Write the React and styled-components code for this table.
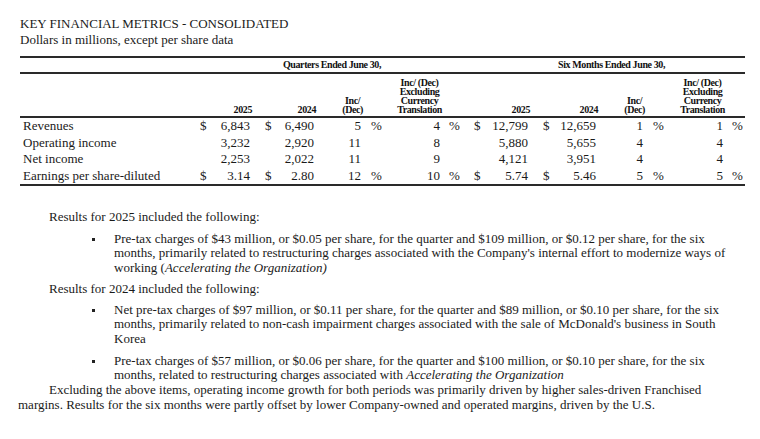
import React from "react";
import styled, { createGlobalStyle } from "styled-components";

const GlobalStyle = createGlobalStyle`
  html, body { margin: 0; padding: 0; background: #ffffff; }
  body {
    color: #1a1a1a;
    font-family: "Liberation Serif", "Times New Roman", serif;
  }
`;

const COLS =
  "178px 12px 40px 25px 39px 47px 31px 48px 26px 19px 43px 27px 41px 47px 32px 48px 22px";

const Page = styled.div`
  width: 760px;
  height: 439px;
  box-sizing: border-box;
  padding: 16px 15px 0 18px;
  overflow: hidden;
`;

const Heading = styled.header`
  padding-left: 2px;
  font-size: 13px;
  line-height: 16px;
`;

const Title = styled.div`
  text-transform: uppercase;
`;

const Table = styled.div`
  margin: 8px 0 0 2px;
  width: 725px;
`;

const GridRow = styled.div`
  display: grid;
  grid-template-columns: ${COLS};
`;

const PeriodRow = styled(GridRow)`
  height: 14px;
  align-items: center;
  border-top: 2px solid #2a2a2a;
  border-bottom: 2px solid #2a2a2a;
`;

const BoldSmall = styled.div`
  font-weight: 700;
  font-size: 10px;
  letter-spacing: -0.4px;
  color: #111111;
`;

const PeriodHead = styled(BoldSmall)`
  grid-column: ${(p) => p.$span};
  padding-left: ${(p) => p.$shift || 0}px;
  text-align: center;
  line-height: 14px;
  white-space: nowrap;
`;

const HeaderRow = styled(GridRow)`
  height: 40px;
  padding-bottom: 2px;
  align-items: end;
  border-bottom: 2px solid #2a2a2a;
`;

const ColHead = styled(BoldSmall)`
  grid-column: ${(p) => p.$span};
  text-align: right;
  margin-right: -2px;
  line-height: 9px;
  white-space: nowrap;
`;

const HeadBlock = styled.span`
  display: inline-block;
  text-align: center;
`;

const Body = styled.div`
  border-bottom: 2px solid #2a2a2a;
`;

const DataRow = styled(GridRow)`
  height: 16.5px;
  align-items: center;
  font-size: 13px;
  line-height: 16.5px;
`;

const Cell = styled.div`
  text-align: ${(p) => p.$align};
  padding-left: ${(p) => p.$pad}px;
  white-space: nowrap;
`;

const Notes = styled.section`
  margin-top: 24px;
  font-size: 13px;
  line-height: 14.7px;
  white-space: nowrap;
`;

const Lead = styled.p`
  margin: ${(p) => p.$gap}px 0 0;
  padding-left: 31px;
`;

const Bullet = styled.div`
  display: grid;
  grid-template-columns: 22px auto;
  padding-left: 74px;
  margin-top: ${(p) => p.$gap}px;
`;

const Mark = styled.span`
  width: 3px;
  height: 3px;
  margin-top: 6px;
  background: #222;
`;

const BulletText = styled.div``;

const Closing = styled.p`
  margin: ${(p) => p.$gap}px 0 0;
  text-indent: 31px;
`;

const SPEC = [
  { a: "left", p: 3 },
  { a: "left", p: 2 },
  { a: "right", p: 0 },
  { a: "left", p: 15 },
  { a: "right", p: 0 },
  { a: "right", p: 0 },
  { a: "left", p: 10 },
  { a: "right", p: 0 },
  { a: "left", p: 9 },
  { a: "left", p: 8 },
  { a: "right", p: 0 },
  { a: "left", p: 15 },
  { a: "right", p: 0 },
  { a: "right", p: 0 },
  { a: "left", p: 10 },
  { a: "right", p: 0 },
  { a: "left", p: 9 },
];

const ROWS = [
  ["Revenues", "$", "6,843", "$", "6,490", "5", "%", "4", "%", "$", "12,799", "$", "12,659", "1", "%", "1", "%"],
  ["Operating income", "", "3,232", "", "2,920", "11", "", "8", "", "", "5,880", "", "5,655", "4", "", "4", ""],
  ["Net income", "", "2,253", "", "2,022", "11", "", "9", "", "", "4,121", "", "3,951", "4", "", "4", ""],
  ["Earnings per share-diluted", "$", "3.14", "$", "2.80", "12", "%", "10", "%", "$", "5.74", "$", "5.46", "5", "%", "5", "%"],
];

const HEADS = [
  { span: "2 / 4", lines: ["2025"] },
  { span: "4 / 6", lines: ["2024"] },
  { span: "6 / 7", lines: ["Inc/", "(Dec)"] },
  { span: "8 / 9", lines: ["Inc/ (Dec)", "Excluding", "Currency", "Translation"] },
  { span: "10 / 12", lines: ["2025"] },
  { span: "12 / 14", lines: ["2024"] },
  { span: "14 / 15", lines: ["Inc/", "(Dec)"] },
  { span: "16 / 17", lines: ["Inc/ (Dec)", "Excluding", "Currency", "Translation"] },
];

export default function App() {
  return (
    <>
      <GlobalStyle />
      <Page>
        <Heading>
          <Title>Key Financial Metrics - Consolidated</Title>
          <div>Dollars in millions, except per share data</div>
        </Heading>

        <Table>
          <PeriodRow>
            <PeriodHead $span="2 / 10">Quarters Ended June 30,</PeriodHead>
            <PeriodHead $span="10 / 18" $shift={12}>Six Months Ended June 30,</PeriodHead>
          </PeriodRow>
          <HeaderRow>
            {HEADS.map((h, i) => (
              <ColHead key={i} $span={h.span}>
                <HeadBlock>
                  {h.lines.map((l, j) => (
                    <React.Fragment key={j}>
                      {j > 0 && <br />}
                      {l}
                    </React.Fragment>
                  ))}
                </HeadBlock>
              </ColHead>
            ))}
          </HeaderRow>
          <Body>
            {ROWS.map((r, i) => (
              <DataRow key={i}>
                {r.map((v, j) => (
                  <Cell key={j} $align={SPEC[j].a} $pad={SPEC[j].p}>
                    {v}
                  </Cell>
                ))}
              </DataRow>
            ))}
          </Body>
        </Table>

        <Notes>
          <Lead $gap={0}>Results for 2025 included the following:</Lead>
          <Bullet $gap={7}>
            <Mark />
            <BulletText>
              Pre-tax charges of $43 million, or $0.05 per share, for the quarter and $109 million, or $0.12 per share, for the six
              <br />
              months, primarily related to restructuring charges associated with the Company's internal effort to modernize ways of
              <br />
              working (<i>Accelerating the Organization)</i>
            </BulletText>
          </Bullet>
          <Lead $gap={6}>Results for 2024 included the following:</Lead>
          <Bullet $gap={6}>
            <Mark />
            <BulletText>
              Net pre-tax charges of $97 million, or $0.11 per share, for the quarter and $89 million, or $0.10 per share, for the six
              <br />
              months, primarily related to non-cash impairment charges associated with the sale of McDonald's business in South
              <br />
              Korea
            </BulletText>
          </Bullet>
          <Bullet $gap={7}>
            <Mark />
            <BulletText>
              Pre-tax charges of $57 million, or $0.06 per share, for the quarter and $100 million, or $0.10 per share, for the six
              <br />
              months, related to restructuring charges associated with <i>Accelerating the Organization</i>
            </BulletText>
          </Bullet>
          <Closing $gap={0}>
            Excluding the above items, operating income growth for both periods was primarily driven by higher sales-driven Franchised
            <br />
            margins. Results for the six months were partly offset by lower Company-owned and operated margins, driven by the U.S.
          </Closing>
        </Notes>
      </Page>
    </>
  );
}
